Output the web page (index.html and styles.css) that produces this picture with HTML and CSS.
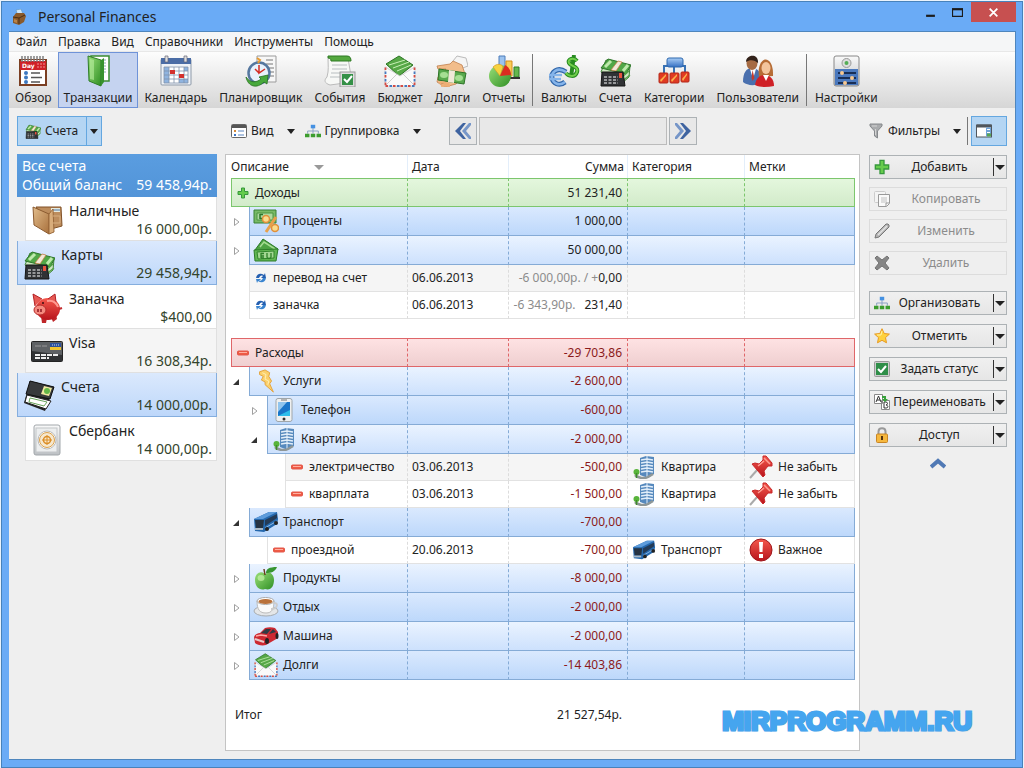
FILE: index.html
```html
<!DOCTYPE html>
<html lang="ru">
<head>
<meta charset="utf-8">
<title>Personal Finances</title>
<link rel="stylesheet" href="styles.css">
</head>
<body>
<svg class="defs" aria-hidden="true">
  <defs>
    <linearGradient id="gGreen" x1="0" y1="0" x2="1" y2="1"><stop offset="0" stop-color="#9be07a"/><stop offset="1" stop-color="#2f8f24"/></linearGradient>
    <linearGradient id="gBrown" x1="0" y1="0" x2="1" y2="1"><stop offset="0" stop-color="#e2bd8c"/><stop offset="1" stop-color="#a8703c"/></linearGradient>
    <linearGradient id="gBlue" x1="0" y1="0" x2="0" y2="1"><stop offset="0" stop-color="#a9cdf5"/><stop offset="1" stop-color="#3671c4"/></linearGradient>
    <linearGradient id="gRed" x1="0" y1="0" x2="0" y2="1"><stop offset="0" stop-color="#f4584c"/><stop offset="1" stop-color="#b8141c"/></linearGradient>
    <linearGradient id="gGrey" x1="0" y1="0" x2="0" y2="1"><stop offset="0" stop-color="#fafafa"/><stop offset="1" stop-color="#bcc0c4"/></linearGradient>
  </defs>
  <symbol id="app" viewBox="0 0 16 16">
    <path d="M5 1l5 -1 2 5-5 2z" fill="#cfe6f7" stroke="#5b93c0" stroke-width=".6"/>
    <path d="M2 8l3-4 8 0 2 3-2 6-5 3-6-2z" fill="#8a5a2b"/><path d="M2 8l6 1 6-3M8 9v6" stroke="#4a2f16" fill="none"/><path d="M3 10l3 1v3l-3-1z" fill="#b98347"/>
  </symbol>
  <symbol id="folder" viewBox="0 0 32 32">
    <path d="M9 1h18v25H9z" fill="#fff" stroke="#3b8c31" stroke-width="1.500"/><path d="M21 5h3M21 8h3M21 11h3M21 14h3M21 17h3" stroke="#8aa" />
    <path d="M6 1l13 4v26L7 26z" fill="url(#gGreen)" stroke="#2f7d28"/><path d="M19 5l3-2v24l-3 4z" fill="#37922d"/><path d="M8 4l4 1v20l-4-1z" fill="#b9eea0" opacity=".6"/>
  </symbol>
  <symbol id="calendar" viewBox="0 0 32 32">
    <rect x="1" y="4" width="30" height="26" rx="1" fill="#eef2f7" stroke="#8d99a8"/><path d="M1 3h30v6H1z" fill="#4b6da6"/>
    <path d="M4 12h24v16H4z" fill="#fff"/><path d="M4 12h5v16H4zM24 12h4v4h-4zM19 24h9v4h-9z" fill="#8fb4e0"/>
    <path d="M4 12h24v16H4zM9 12v16M14 12v16M19 12v16M24 12v16M4 16h24M4 20h24M4 24h24" fill="none" stroke="#8292aa" stroke-width=".8"/>
    <path d="M10 15h5v4h-5zM19 19h5v4h-5z" fill="#d3302c"/><path d="M5 1h3v6H5zM24 1h3v6h-3z" fill="#ddd" stroke="#667" stroke-width=".7"/>
  </symbol>
  <symbol id="planner" viewBox="0 0 32 32">
    <path d="M12 1h19v26H12z" fill="#f7f7f7" stroke="#9b9b9b"/><path d="M21 5h7M21 9h7M24 13h5M24 17h5M24 21h5" stroke="#777"/>
    <circle cx="14" cy="18" r="10.500" fill="#e8f2fc" stroke="#55779f" stroke-width="2.500"/><path d="M14 10v8l6-4M14 18l-4-4" stroke="#d42b22" stroke-width="1.500" fill="none"/><path d="M12 3l3 2-2 3" fill="none" stroke="#e79b32" stroke-width="2"/>
    <path d="M1 22c4 6 10 6 15 2l-2-2 9-2-1 9-3-2C12 34 3 32 1 22z" fill="#48a93c" stroke="#27701f" stroke-width=".8"/>
  </symbol>
  <symbol id="events" viewBox="0 0 32 32">
    <path d="M4 3h20l4 24-22 3c-6-2-6-5-3-8 2-7 1-12 1-19z" fill="#f7f8f6" stroke="#bbb"/><path d="M4 1h19c3 0 4 2 4 5H7c0-2-1-3-3-3z" fill="#54a83f" stroke="#2f7a25"/>
    <path d="M8 10h15M8 14h15M7 18h12M6 22h10" stroke="#b8bec0"/><rect x="16" y="17" width="15" height="15" fill="#ddd" stroke="#999"/><rect x="18" y="19" width="11" height="11" fill="#349046"/><path d="M20 24l3 3 5-6" fill="none" stroke="#fff" stroke-width="2"/>
  </symbol>
  <symbol id="envelope" viewBox="0 0 32 32">
    <path d="M2 9L15 1l14 9-14 11z" fill="#57a847" stroke="#2c7524"/><path d="M5 10l16-5M9 13l16-6M13 16l14-6" stroke="#c9efb7"/>
    <path d="M1 12l15 9 15-9v19H1z" fill="#fafafa" stroke="#ccc" stroke-width=".7"/><path d="M1 31l12-12M31 31L19 19" stroke="#ccc"/>
    <path d="M1.500 12.500v18.500M30.500 12.500v18.500M1.500 31h29" fill="none" stroke="#d64b44" stroke-width="1.800" stroke-dasharray="2.500 5"/><path d="M1.500 16.500v14.500M30.500 16.500v14.500M5.500 31h25" fill="none" stroke="#4679c0" stroke-width="1.800" stroke-dasharray="2.500 5"/>
  </symbol>
  <symbol id="debts" viewBox="0 0 32 32">
    <path d="M17 6l4-5 9 2 2 8-8 3-7-3z" fill="#f5f5f5" stroke="#bbb"/><path d="M1 11l13-2 3-3 9 4 3 9-9 10-11 3-8-5 1-5 8-8-8 0z" fill="#f2bd8b" stroke="#c07f4c" stroke-width=".8"/>
    <path d="M3 14l27 4-2 11-26-4z" fill="#59a94d" stroke="#2e7428"/><ellipse cx="8" cy="20" rx="4" ry="3" fill="#a6df93"/><ellipse cx="23" cy="23" rx="4" ry="3" fill="#a6df93"/><path d="M13 15l6 1-1 12-6-1z" fill="#f0e8d8"/>
    <path d="M3 28c3-1 8 0 10 2M5 31c3-1 6-1 9 0" stroke="#eead74" stroke-width="2.500"/>
  </symbol>
  <symbol id="reports" viewBox="0 0 32 32">
    <path d="M11 1h6v18h-6z" fill="#9cc3ef" stroke="#4c7dba"/><path d="M18 6h6v15h-6z" fill="#f9cd56" stroke="#d48d1c"/><path d="M26 12h5v10h-5z" fill="#64b84e" stroke="#2e7d27"/><path d="M16 22h16v2H16z" fill="#333"/>
    <circle cx="12" cy="21" r="11" fill="url(#gGreen)"/><path d="M12 21L5 12c4-4 9-3 10 0z" fill="#f7d33f" stroke="#d59b26" stroke-width=".7"/><path d="M12 21l5-11c4 2 6 6 6 10z" fill="#dc2d20"/>
  </symbol>
  <symbol id="currency" viewBox="0 0 32 32">
    <path d="M18 17c-9-6-15 1-14 6s7 9 13 4" fill="none" stroke="#2f65a9" stroke-width="5"/><path d="M18 17c-9-6-15 1-14 6s7 9 13 4M1 20h13M1 24h12" fill="none" stroke="#85b4ea" stroke-width="2.500"/>
    <path d="M29 6c-3-4-10-2-8 2s10 3 8 9-9 4-11 1M26 0l-3 22" fill="none" stroke="#278b20" stroke-width="4"/><path d="M29 6c-3-4-10-2-8 2s10 3 8 9-9 4-11 1" fill="none" stroke="#72cf4c" stroke-width="2"/>
  </symbol>
  <symbol id="moneycalc" viewBox="0 0 32 32">
    <path d="M2 17l5-12 24 6-1 11-8 7z" fill="#cfe9c2" stroke="#3d8238"/><path d="M2 13L9 4l23 6-5 9z" fill="#51a747" stroke="#2e7529"/><path d="M22 23l8-7M22 27l9-7" stroke="#56a34a" stroke-width="1.500"/>
    <path d="M6 12l6-6M24 16l5-6" stroke="#bfe9ac" stroke-width="3"/><path d="M12 15l7-9 4 1-6 9z" fill="#f2e9da" stroke="#d07a45" stroke-width=".7"/>
    <path d="M3 17h21l2 14H2z" fill="#303235" stroke="#151515"/><path d="M5 22h14M5 25h14M5 28h14" stroke="#b9babc" stroke-width="1.400" stroke-dasharray="3 1.500"/><path d="M20 18h3v5h-3z" fill="#e6533e"/>
  </symbol>
  <symbol id="categories" viewBox="0 0 32 32">
    <path d="M6 19v-8h21v8M16 8v14" fill="none" stroke="#3872b4" stroke-width="2"/><rect x="9" y="3" width="16" height="9" rx="2" fill="url(#gBlue)" stroke="#2e68ae"/>
    <g fill="#e03a22" stroke="#b3281a"><rect x="1" y="18" width="9" height="10" rx="1"/><rect x="12" y="18" width="9" height="10" rx="1"/><rect x="23" y="17" width="8" height="10" rx="1"/></g><path d="M2 25l6-6v2l-5 6zM13 25l6-6v2l-5 6zM24 24l5-6v2l-4 6z" fill="#fbb04b"/>
  </symbol>
  <symbol id="users" viewBox="0 0 32 32">
    <path d="M1 27c0-9 3-14 9-14s10 5 9 15c-6 3-13 3-18-1z" fill="#4a70ae"/><path d="M8 14l3 10 3-10z" fill="#fff"/><path d="M10.500 15l2 8-2 3-1-3z" fill="#c43b2e"/><ellipse cx="10" cy="8" rx="5.500" ry="7" fill="#a66b43"/><path d="M4 7c0-8 13-9 12 1-3-3-8-4-12-1z" fill="#33231b"/>
    <path d="M17 22c-3-22 15-24 14-1z" fill="#b66c35"/><ellipse cx="24" cy="13" rx="4.500" ry="6" fill="#f3c49c"/><path d="M13 30c1-7 5-10 10-10s9 4 9 11c-6 1-13 2-19-1z" fill="#cf2026"/><path d="M21 20l3 6 3-6z" fill="#fff"/>
  </symbol>
  <symbol id="settings" viewBox="0 0 32 32">
    <rect x="4" y="1" width="25" height="30" rx="2" fill="url(#gGrey)" stroke="#888"/><circle cx="16.500" cy="8" r="4.500" fill="#ddd" stroke="#999"/><circle cx="16.500" cy="8" r="2" fill="#54ad55"/>
    <path d="M5 14h23v16H5z" fill="#4a78bd"/><path d="M8 18h18M8 23h18M8 28h18" stroke="#182e55" stroke-width="2"/><g fill="#f7c890"><circle cx="12" cy="18" r="2"/><circle cx="22" cy="23" r="2"/><circle cx="15" cy="28" r="2"/></g>
  </symbol>
  <symbol id="listview" viewBox="0 0 16 14">
    <rect x=".5" y=".5" width="15" height="13" rx="1" fill="#fff" stroke="#666"/><path d="M1 1h14v3H1z" fill="#555"/><path d="M3 6h2v2H3z" fill="#d58a38"/><path d="M3 10h2v2H3z" fill="#3b75c3"/><path d="M7 7h6M7 11h6" stroke="#5b85c0"/>
  </symbol>
  <symbol id="org" viewBox="0 0 18 16">
    <path d="M9 4v7M3 11V8h12v3" fill="none" stroke="#829bbd"/><path d="M6.500 1h5v4h-5z" fill="#4591e2"/><path d="M0 11h5v4H0zM6.500 11h5v4h-5zM13 11h5v4h-5z" fill="#3c9d2e"/>
  </symbol>
  <symbol id="prev" viewBox="0 0 16 16"><path d="M8 0L0 8l8 8h3L5 8l6-8z" fill="#3e63a0"/><path d="M14 0L7 8l7 8h2v-2l-5-6 5-6V0z" fill="#7696c8"/></symbol>
  <symbol id="next" viewBox="0 0 16 16"><path d="M8 0l8 8-8 8H5l6-8-6-8z" fill="#3e63a0"/><path d="M2 0l7 8-7 8H0v-2l5-6-5-6V0z" fill="#7696c8"/></symbol>
  <symbol id="funnel" viewBox="0 0 14 16"><path d="M1 1h12v2L8.500 8v7l-3-2V8L1 3z" fill="#a9abad" stroke="#85888b"/><path d="M3 3h5M6.500 6v6" stroke="#d4d4d4"/></symbol>
  <symbol id="panel" viewBox="0 0 16 13"><rect x=".5" y=".5" width="15" height="12" fill="#fff" stroke="#50565c"/><path d="M1 0h14v3H1z" fill="#50565c"/><path d="M10 3h5v9h-5z" fill="#6fa3d9"/><path d="M11 5h3M11 8h3" stroke="#fff"/><path d="M11 9h4v3h-4z" fill="#5aa552"/></symbol>
  <symbol id="wallet" viewBox="0 0 32 32">
    <path d="M5 3h25l1 19-11 3z" fill="#bd8d5d" stroke="#805127"/><path d="M20 4h9v4h-9z" fill="#e5eadf"/><path d="M22 6h7" stroke="#4e79a9"/><path d="M2 3l16 7v20L3 21z" fill="url(#gBrown)" stroke="#8b5b31"/><path d="M18 10l4-5 1 23-5 2z" fill="#d9ad7b" stroke="#9a693b"/><path d="M22 12h7v7h-7" fill="none" stroke="#d7ae80"/>
  </symbol>
  <symbol id="piggy" viewBox="0 0 32 32">
    <path d="M10 24l1 7h4l1-5M20 25l2 5 4-3-1-5" fill="#bf2629"/><ellipse cx="17" cy="17" rx="12" ry="11" fill="url(#gRed)"/><path d="M4 14L2 2l9 5M17 7l7-5 1 8" fill="#e65a54" stroke="#b42024"/><ellipse cx="9" cy="18" rx="6" ry="5" fill="#f48a7f" stroke="#b72a2a"/><path d="M7 17v3M10 17v3" stroke="#8d1620" stroke-width="1.500"/><path d="M16 9c5-1 9 1 11 6" fill="none" stroke="#ff9b91" stroke-width="2"/><circle cx="12" cy="11" r="1" fill="#3b0d10"/><path d="M28 17l3-1" stroke="#c32d30" stroke-width="2"/>
  </symbol>
  <symbol id="card" viewBox="0 0 32 22">
    <rect x=".5" y=".5" width="31" height="20" rx="1" fill="#5e6164" stroke="#242424"/><path d="M1 10l30 4v6H1z" fill="#303234"/><path d="M19 2h11v4H19z" fill="#2c519b"/><path d="M19 6h11v3H19z" fill="#f0c330"/><path d="M21 4h7" stroke="#cfd9ee" stroke-dasharray="1 1"/><path d="M4 5h12" stroke="#999" stroke-dasharray="6 1"/><path d="M4 14h23M4 17h14" stroke="#eee" stroke-width="2" stroke-dasharray="5 1"/>
  </symbol>
  <symbol id="checkbook" viewBox="0 0 32 32">
    <path d="M7 1l24 6-9 24L1 23z" fill="#242526"/><path d="M7 1l24 6-4 12L3 14z" fill="#37393b" stroke="#111"/><path d="M21 6l8 2-3 8-8-2z" fill="#f0e8a0"/><circle cx="24" cy="11" r="3" fill="#64b647"/><path d="M4 15l24 6-5 8L2 22z" fill="#fff" stroke="#222"/><path d="M7 18l17 4-3 4-15-4z" fill="none" stroke="#68a45b"/>
  </symbol>
  <symbol id="safe" viewBox="0 0 28 32">
    <rect x="1" y="1" width="26" height="30" rx="2" fill="url(#gGrey)" stroke="#a2a7ab"/><rect x="3" y="4" width="21" height="24" fill="#eceeef" stroke="#c2c5c8"/><circle cx="14" cy="16" r="9" fill="#fff" stroke="#bbb"/><circle cx="14" cy="16" r="7.500" fill="#f6e8cf" stroke="#daa14c"/><circle cx="14" cy="16" r="3.500" fill="none" stroke="#dc8e27" stroke-width="1.500"/><path d="M14 11v10M9 16h10" stroke="#dc8e27"/>
  </symbol>
  <symbol id="cash" viewBox="0 0 26 24">
    <path d="M2 12L10 1l15 10-2 5z" fill="#4da343" stroke="#2b7927"/><path d="M7 9l4-5 11 7" fill="none" stroke="#a5dc92" stroke-width="1.500"/><path d="M1 12l24-1-2 12H2z" fill="#61b652" stroke="#2d7c29"/><path d="M4 14l17-1v7l-16 1z" fill="#a3d792" stroke="#31852b"/><path d="M8 15v5M8 15.500h3M8 18h3M8 20h3M14 15v4c0 2 4 2 4 0v-4" fill="none" stroke="#2d8028" stroke-width="1.300"/>
  </symbol>
  <symbol id="percent" viewBox="0 0 26 24">
    <path d="M1 1h22v13H1z" fill="#78b966" stroke="#388134"/><path d="M4 4h16v7H4z" fill="#aed99f" stroke="#4c9443"/><path d="M7 5v5M7 5.500h3M7 9.500h3" stroke="#2c752a" stroke-width="1.500"/><path d="M13 23L23 8" stroke="#e8a04a" stroke-width="3"/><circle cx="13" cy="10" r="3.500" fill="#fbdc8c" stroke="#e08f3a" stroke-width="1.500"/><circle cx="22" cy="19" r="3.500" fill="#fbdc8c" stroke="#e08f3a" stroke-width="1.500"/>
  </symbol>
  <symbol id="sync" viewBox="0 0 12 12"><path d="M1 6c1-5 5-5 8-3l1-2 1 5H6l2-2c-2-1-3 0-4 2z" fill="#245fb0"/><path d="M11 6c-1 5-5 5-8 3l-1 2-1-4h5L4 9c2 0 3-1 4-3z" fill="#3984d0"/></symbol>
  <symbol id="minus" viewBox="0 0 12 6"><rect x=".5" y="1" width="11" height="4" rx="1" fill="#ef5b44" stroke="#e2574a"/><path d="M2 2.500h8" stroke="#ffaea0"/></symbol>
  <symbol id="plus" viewBox="0 0 12 12"><path d="M4.500 1h3v3.500H11v3H7.500V11h-3V7.500H1v-3h3.500z" fill="#66cc4c" stroke="#37983c"/></symbol>
  <symbol id="bolt" viewBox="0 0 20 26"><path d="M3 3l6-2 5 3-1 4 3 5-2 3 4 9-9-8 0-3-4-2 2-4-4-2z" fill="#fbd06a" stroke="#e3a138"/><path d="M6 4l4 2-1 5 4 2-1 4" fill="none" stroke="#fff0b8"/></symbol>
  <symbol id="phone" viewBox="0 0 18 24"><rect x="1" y=".5" width="16" height="23" rx="2" fill="#eef0f1" stroke="#a0a6aa"/><path d="M3 4h12v14H3z" fill="#1a75c9"/><path d="M3 4h9L3 14z" fill="#8fc4ee"/><path d="M3 18l12-6v6z" fill="#2ebdeb"/><path d="M6 2h6" stroke="#777"/><circle cx="9" cy="21" r="1.500" fill="#333"/></symbol>
  <symbol id="building" viewBox="0 0 22 24"><path d="M7 3l6-2 8 1v17l-6 4-8-3z" fill="#5689bd"/><path d="M14 1v21" stroke="#e5f0fa"/><path d="M8 5l6-1 6 1M8 8l6-1 6 1M8 11l6-1 6 1M8 14l6-1 6 1M8 17l6-1 6 1" fill="none" stroke="#e2eef9" stroke-width="1.500"/><path d="M2 20c3 3 9 4 13 2l5-3" fill="none" stroke="#8f9797" stroke-width="2.500"/><circle cx="3.500" cy="17" r="3" fill="#58b43a"/><path d="M3.500 18v5" stroke="#3f8a2a" stroke-width="1.500"/></symbol>
  <symbol id="bus" viewBox="0 0 26 22"><path d="M1 8L16 1h8l1 7-1 5-13 8-9-1z" fill="#2568ad"/><path d="M1 8L16 1h8L10 8z" fill="#5e9cdb"/><path d="M2 9h9l-1 8H3z" fill="#263342"/><path d="M12 9l12-6v4l-12 8z" fill="#243b57"/><path d="M12 17l12-7" stroke="#8db9e6"/><path d="M2 18h8" stroke="#aab9c6" stroke-width="2"/><circle cx="14" cy="18" r="2" fill="#222"/><circle cx="23" cy="12" r="2" fill="#222"/></symbol>
  <symbol id="pin" viewBox="0 0 24 24"><path d="M9 14L1 23" stroke="#aaa" stroke-width="2"/><path d="M3 9l3-1 4 1 4-4V1l3 0 6 7v3l-4 0-4 5 1 4-2 2z" fill="url(#gRed)" stroke="#c9292a"/><path d="M9 11l6-5M15 3l6 6" stroke="#ff9d92" stroke-width="1.500"/></symbol>
  <symbol id="alert" viewBox="0 0 24 24"><circle cx="12" cy="12" r="11" fill="url(#gRed)" stroke="#9f171c"/><path d="M10 4h4l-.5 10h-3zM10 16h4v4h-4z" fill="#fff"/></symbol>
  <symbol id="apple" viewBox="0 0 24 24"><path d="M11 8C7 4 1 7 1 14s5 11 10 9c6 2 9-3 9-9S15 4 11 8z" fill="url(#gGreen)"/><path d="M12 7c0-4 3-6 11-6-2 5-6 6-11 6" fill="#379531"/><path d="M10 3l1 6" stroke="#6b3b20" stroke-width="1.500"/><ellipse cx="7" cy="12" rx="3.500" ry="3" fill="#c8f3a9" opacity=".7"/></symbol>
  <symbol id="coffee" viewBox="0 0 26 22"><ellipse cx="13" cy="15" rx="12" ry="5" fill="#e4e6e8" stroke="#a8acb0"/><path d="M4 5c0 9 3 12 9 12s8-4 8-12z" fill="#fafafa" stroke="#bbb"/><ellipse cx="12.500" cy="5" rx="8.500" ry="3.500" fill="#fff" stroke="#aaa"/><ellipse cx="12.500" cy="5.500" rx="7" ry="2.500" fill="#b9713a"/><path d="M20 7c6-1 5 6-2 6" fill="none" stroke="#ccc" stroke-width="2"/></symbol>
  <symbol id="car" viewBox="0 0 26 20"><path d="M1 11c1-3 4-4 6-4l5-5c3-1 7-1 10 0l3 4v6l-12 7c-4 1-9 0-11-2z" fill="#cd2932"/><path d="M8 7l5-4h5l-4 5zM20 3l3 3-7 2z" fill="#2f3b43"/><path d="M3 10l5-1 6 1" stroke="#ffaba5" fill="none" stroke-width="1.500"/><path d="M2 13l9 3" stroke="#e8c8c8" stroke-width="2"/><ellipse cx="14" cy="15" rx="2" ry="3" fill="#222"/><ellipse cx="24" cy="10" rx="1.500" ry="3" fill="#222"/></symbol>
  <symbol id="copy" viewBox="0 0 16 16"><rect x=".5" y=".5" width="11" height="11" rx="1" fill="#f4f4f4" stroke="#ccc"/><path d="M4.500 3.500h11v9l-3 3h-8z" fill="#fafafa" stroke="#999"/><path d="M7 6h6v6H7z" fill="#ddd"/><path d="M12 15v-3h3" fill="none" stroke="#999"/></symbol>
  <symbol id="pencil" viewBox="0 0 16 16"><path d="M1 15l1-4L12 1h2l1 1v2L5 14z" fill="#b4b4b4" stroke="#777"/><path d="M4 12L13 3" stroke="#e4e4e4" stroke-width="1.500"/></symbol>
  <symbol id="cross" viewBox="0 0 16 16"><path d="M3 1l5 4 5-4 2 2-4 5 4 5-2 2-5-4-5 4-2-2 4-5-4-5z" fill="#868686" stroke="#747474"/></symbol>
  <symbol id="star" viewBox="0 0 16 16"><path d="M8 .7l2.200 4.800 5.200.6-3.900 3.500 1 5.200L8 12.300l-4.500 2.500 1-5.200L.6 6.100l5.200-.6z" fill="#fed13d" stroke="#e89a22"/><path d="M8 3l-1 4-4 0" fill="none" stroke="#fff2a8"/></symbol>
  <symbol id="check" viewBox="0 0 16 16"><rect x=".5" y=".5" width="15" height="15" rx="1" fill="#ccc" stroke="#999"/><path d="M2 2h12v12H2z" fill="#2f8e48"/><path d="M4 8l3 3 5-6" fill="none" stroke="#fff" stroke-width="2"/></symbol>
  <symbol id="rename" viewBox="0 0 16 16"><path d="M.5.500h8v9h-8zM7.500 6.500h8v9h-8z" fill="#fff" stroke="#888"/><path d="M2 8l2.500-6L7 8M3 6h3M10 8v6h2c3 0 2-3 0-3 2 0 2-3 0-3z" fill="none" stroke="#333"/><path d="M8 2h4v3h2l-3 3-3-3h2V4H8z" fill="#37a13a"/></symbol>
  <symbol id="lock" viewBox="0 0 12 16"><path d="M2.500 8V4.500c0-4.500 7-4.500 7 0V8" fill="none" stroke="#999" stroke-width="2"/><rect x=".5" y="7" width="11" height="8.500" rx="1" fill="#f6b83e" stroke="#c98524"/><path d="M6 9v4" stroke="#573510" stroke-width="2"/></symbol>
  <symbol id="up" viewBox="0 0 16 12"><path d="M1 9l7-6 7 6" fill="none" stroke="#5079b5" stroke-width="4"/></symbol>
  <symbol id="closed" viewBox="0 0 8 10"><path d="M1.500 1.500L6 5 1.500 8.500z" fill="#fff" stroke="#a0a0a0"/></symbol>
  <symbol id="open" viewBox="0 0 8 10"><path d="M6 2v6H0z" fill="#333"/></symbol>
</svg>

<div class="window">
  <header class="titlebar">
    <svg class="i16"><use href="#app"/></svg>
    <h1>Personal Finances</h1>
    <div class="winbuttons">
      <button type="button" aria-label="Свернуть"><svg viewBox="0 0 10 10"><path d="M1 8h8" stroke="#1c1c1c" stroke-width="2"/></svg></button>
      <button type="button" aria-label="Развернуть"><svg viewBox="0 0 10 10"><path d="M.5 2h9v6.500h-9z" fill="none" stroke="#1c1c1c"/><path d="M0 2h10" stroke="#1c1c1c" stroke-width="2"/></svg></button>
      <button type="button" class="close" aria-label="Закрыть"><svg viewBox="0 0 10 10"><path d="M1.500 1.500l7 7M8.500 1.500l-7 7" stroke="#fff" stroke-width="1.600"/></svg></button>
    </div>
  </header>

  <div class="client">
    <nav class="menu">
      <a href="#">Файл</a><a href="#">Правка</a><a href="#">Вид</a><a href="#">Справочники</a><a href="#">Инструменты</a><a href="#">Помощь</a>
    </nav>

    <div class="toolbar">
      <button type="button"><svg viewBox="0 0 32 32">
        <path d="M2 4h28v27H2z" fill="#7b3f22"/><path d="M4 5h24v24H4z" fill="#fff"/><path d="M3 6h26v9H3z" fill="#cf2027"/>
        <path d="M5 1v6M8 1v6M11 1v6M14 1v6M17 1v6M20 1v6M23 1v6M26 1v6" stroke="#777" stroke-width="1.400"/>
        <text x="5" y="13" font-family="DejaVu Sans" font-weight="bold" font-size="6" fill="#fff">Day</text>
        <path d="M20 9h8M20 12h8" stroke="#f09090" stroke-dasharray="2 1"/>
        <g fill="#3c78c0"><circle cx="9" cy="18" r="2"/><circle cx="9" cy="22.500" r="2"/><circle cx="9" cy="27" r="2"/></g>
        <path d="M14 18h9M14 22.500h11M14 27h9" stroke="#555" stroke-width="1.500"/>
      </svg>Обзор</button>
      <button type="button" class="active"><svg><use href="#folder"/></svg>Транзакции</button>
      <button type="button"><svg><use href="#calendar"/></svg>Календарь</button>
      <button type="button"><svg><use href="#planner"/></svg>Планировщик</button>
      <button type="button"><svg><use href="#events"/></svg>События</button>
      <button type="button"><svg><use href="#envelope"/></svg>Бюджет</button>
      <button type="button"><svg><use href="#debts"/></svg>Долги</button>
      <button type="button"><svg><use href="#reports"/></svg>Отчеты</button>
      <span class="sep"></span>
      <button type="button"><svg><use href="#currency"/></svg>Валюты</button>
      <button type="button"><svg><use href="#moneycalc"/></svg>Счета</button>
      <button type="button"><svg><use href="#categories"/></svg>Категории</button>
      <button type="button"><svg><use href="#users"/></svg>Пользователи</button>
      <span class="sep"></span>
      <button type="button"><svg><use href="#settings"/></svg>Настройки</button>
    </div>

    <div class="workspace">
      <div class="accounts-bar">
        <div class="split-blue">
          <button type="button"><svg class="i16"><use href="#moneycalc"/></svg>Счета</button>
          <button type="button" class="drop" aria-label="Список счетов"><span class="tri"></span></button>
        </div>
      </div>
      <div class="view-bar">
        <button type="button" class="flat"><svg class="i16"><use href="#listview"/></svg>Вид<span class="tri"></span></button>
        <button type="button" class="flat group"><svg class="i16"><use href="#org"/></svg>Группировка<span class="tri"></span></button>
        <div class="period">
          <button type="button" aria-label="Назад"><svg><use href="#prev"/></svg></button>
          <button type="button" class="range" aria-label="Период"></button>
          <button type="button" aria-label="Вперед"><svg><use href="#next"/></svg></button>
        </div>
      </div>
      <div class="filter-bar">
        <button type="button" class="flat"><svg class="i16"><use href="#funnel"/></svg>Фильтры<span class="tri"></span></button>
        <span class="sep"></span>
        <button type="button" class="panel-toggle" aria-label="Панель"><svg class="i16"><use href="#panel"/></svg></button>
      </div>

      <aside class="accounts">
        <a href="#" class="total"><span>Все счета</span><span class="line">Общий баланс <b>59 458,94р.</b></span></a>
        <a href="#" class="acc"><svg><use href="#wallet"/></svg><span class="nm">Наличные</span><span class="amt">16 000,00р.</span></a>
        <a href="#" class="acc grp"><svg><use href="#moneycalc"/></svg><span class="nm">Карты</span><span class="amt">29 458,94р.</span></a>
        <a href="#" class="acc"><svg><use href="#piggy"/></svg><span class="nm">Заначка</span><span class="amt">$400,00</span></a>
        <a href="#" class="acc alt"><svg><use href="#card"/></svg><span class="nm">Visa</span><span class="amt">16 308,34р.</span></a>
        <a href="#" class="acc grp"><svg><use href="#checkbook"/></svg><span class="nm">Счета</span><span class="amt">14 000,00р.</span></a>
        <a href="#" class="acc"><svg><use href="#safe"/></svg><span class="nm">Сбербанк</span><span class="amt">14 000,00р.</span></a>
      </aside>

      <main class="sheet">
        <table>
          <colgroup><col class="c1"><col class="c2"><col class="c3"><col class="c4"><col class="c5"></colgroup>
          <thead><tr><th>Описание <span class="tri sort"></span></th><th>Дата</th><th class="num">Сумма</th><th>Категория</th><th>Метки</th></tr></thead>
          <tbody>
            <tr class="income"><td class="name"><div class="cell"><svg class="i12"><use href="#plus"/></svg>Доходы</div></td><td></td><td class="num">51 231,40</td><td></td><td></td></tr>
            <tr class="cat deep"><td class="name"><div class="lvl"><svg class="tw"><use href="#closed"/></svg><div class="cell"><svg class="i26"><use href="#percent"/></svg>Проценты</div></div></td><td></td><td class="num">1 000,00</td><td></td><td></td></tr>
            <tr class="cat"><td class="name"><div class="lvl"><svg class="tw"><use href="#closed"/></svg><div class="cell"><svg class="i26"><use href="#cash"/></svg>Зарплата</div></div></td><td></td><td class="num">50 000,00</td><td></td><td></td></tr>
            <tr class="item alt"><td class="name"><div class="lvl"><span class="tw"></span><div class="cell"><svg class="i12"><use href="#sync"/></svg>перевод на счет</div></div></td><td>06.06.2013</td><td class="num"><i>-6 000,00р. / +</i>0,00</td><td></td><td></td></tr>
            <tr class="item"><td class="name"><div class="lvl"><span class="tw"></span><div class="cell"><svg class="i12"><use href="#sync"/></svg>заначка</div></div></td><td>06.06.2013</td><td class="num"><i class="away">-6 343,90р.</i>231,40</td><td></td><td></td></tr>
            <tr class="blank"><td colspan="5"></td></tr>
            <tr class="expense"><td class="name"><div class="cell"><svg class="i12"><use href="#minus"/></svg>Расходы</div></td><td></td><td class="num neg">-29 703,86</td><td></td><td></td></tr>
            <tr class="cat"><td class="name"><div class="lvl"><svg class="tw"><use href="#open"/></svg><div class="cell"><svg class="i26"><use href="#bolt"/></svg>Услуги</div></div></td><td></td><td class="num neg">-2 600,00</td><td></td><td></td></tr>
            <tr class="cat deep"><td class="name"><div class="lvl two"><svg class="tw"><use href="#closed"/></svg><div class="cell"><svg class="i26"><use href="#phone"/></svg>Телефон</div></div></td><td></td><td class="num neg">-600,00</td><td></td><td></td></tr>
            <tr class="cat"><td class="name"><div class="lvl two"><svg class="tw"><use href="#open"/></svg><div class="cell"><svg class="i26"><use href="#building"/></svg>Квартира</div></div></td><td></td><td class="num neg">-2 000,00</td><td></td><td></td></tr>
            <tr class="item alt"><td class="name"><div class="lvl three"><span class="tw"></span><div class="cell"><svg class="i12"><use href="#minus"/></svg>электричество</div></div></td><td>03.06.2013</td><td class="num neg">-500,00</td><td><div class="tag"><svg><use href="#building"/></svg>Квартира</div></td><td><div class="tag"><svg><use href="#pin"/></svg>Не забыть</div></td></tr>
            <tr class="item"><td class="name"><div class="lvl three"><span class="tw"></span><div class="cell"><svg class="i12"><use href="#minus"/></svg>кварплата</div></div></td><td>03.06.2013</td><td class="num neg">-1 500,00</td><td><div class="tag"><svg><use href="#building"/></svg>Квартира</div></td><td><div class="tag"><svg><use href="#pin"/></svg>Не забыть</div></td></tr>
            <tr class="cat deep"><td class="name"><div class="lvl"><svg class="tw"><use href="#open"/></svg><div class="cell"><svg class="i26"><use href="#bus"/></svg>Транспорт</div></div></td><td></td><td class="num neg">-700,00</td><td></td><td></td></tr>
            <tr class="item"><td class="name"><div class="lvl two"><span class="tw"></span><div class="cell"><svg class="i12"><use href="#minus"/></svg>проездной</div></div></td><td>20.06.2013</td><td class="num neg">-700,00</td><td><div class="tag"><svg><use href="#bus"/></svg>Транспорт</div></td><td><div class="tag"><svg><use href="#alert"/></svg>Важное</div></td></tr>
            <tr class="cat"><td class="name"><div class="lvl"><svg class="tw"><use href="#closed"/></svg><div class="cell"><svg class="i26"><use href="#apple"/></svg>Продукты</div></div></td><td></td><td class="num neg">-8 000,00</td><td></td><td></td></tr>
            <tr class="cat deep"><td class="name"><div class="lvl"><svg class="tw"><use href="#closed"/></svg><div class="cell"><svg class="i26"><use href="#coffee"/></svg>Отдых</div></div></td><td></td><td class="num neg">-2 000,00</td><td></td><td></td></tr>
            <tr class="cat"><td class="name"><div class="lvl"><svg class="tw"><use href="#closed"/></svg><div class="cell"><svg class="i26"><use href="#car"/></svg>Машина</div></div></td><td></td><td class="num neg">-2 000,00</td><td></td><td></td></tr>
            <tr class="cat deep"><td class="name"><div class="lvl"><svg class="tw"><use href="#closed"/></svg><div class="cell"><svg class="i26"><use href="#envelope"/></svg>Долги</div></div></td><td></td><td class="num neg">-14 403,86</td><td></td><td></td></tr>
          </tbody>
          <tfoot><tr><td>Итог</td><td></td><td class="num">21 527,54р.</td><td></td><td></td></tr></tfoot>
        </table>
      </main>

      <aside class="actions">
        <div class="act"><button type="button"><svg><use href="#plus"/></svg><span>Добавить</span></button><button type="button" class="more" aria-label="Ещё"><span class="tri"></span></button></div>
        <div class="act off"><button type="button" disabled><svg><use href="#copy"/></svg><span>Копировать</span></button></div>
        <div class="act off"><button type="button" disabled><svg><use href="#pencil"/></svg><span>Изменить</span></button></div>
        <div class="act off"><button type="button" disabled><svg><use href="#cross"/></svg><span>Удалить</span></button></div>
        <div class="act first"><button type="button"><svg><use href="#org"/></svg><span>Организовать</span></button><button type="button" class="more" aria-label="Ещё"><span class="tri"></span></button></div>
        <div class="act low"><button type="button"><svg><use href="#star"/></svg><span>Отметить</span></button><button type="button" class="more" aria-label="Ещё"><span class="tri"></span></button></div>
        <div class="act low"><button type="button"><svg><use href="#check"/></svg><span>Задать статус</span></button><button type="button" class="more" aria-label="Ещё"><span class="tri"></span></button></div>
        <div class="act low"><button type="button"><svg><use href="#rename"/></svg><span>Переименовать</span></button><button type="button" class="more" aria-label="Ещё"><span class="tri"></span></button></div>
        <div class="act low"><button type="button"><svg><use href="#lock"/></svg><span>Доступ</span></button><button type="button" class="more" aria-label="Ещё"><span class="tri"></span></button></div>
        <button type="button" class="collapse" aria-label="Свернуть панель"><svg><use href="#up"/></svg></button>
      </aside>
    </div>
  </div>
  <div class="watermark">MIRPROGRAMM.RU</div>
</div>
</body>
</html>
```
FILE: styles.css
```css
* { box-sizing: border-box; }
body { margin: 0; background: #eaf3fc; font: 12px/16px "Noto Sans", "Open Sans", sans-serif; color: #222; }
button { font: inherit; color: inherit; background: none; border: 0; padding: 0; margin: 0; display: flex; align-items: center; white-space: nowrap; }
a { color: inherit; text-decoration: none; }
svg { flex: none; display: block; }
.defs { position: absolute; width: 0; height: 0; }
.i12 { width: 12px; height: 12px; }
.i16 { width: 16px; height: 16px; }
.i26 { width: 26px; height: 24px; }
.tri { width: 0; height: 0; border: 4px solid transparent; border-top: 5px solid #222; border-bottom: 0; }

body { min-height: 100vh; padding: 1px; display: flex; flex-direction: column; }
.window { position: relative; flex: 1; display: flex; flex-direction: column; background: #6aabf6; border: 1px solid #4782bb; padding: 0 6px 7px 7px; }
.titlebar { height: 29px; display: flex; align-items: center; gap: 11px; padding-left: 2px; }
.titlebar h1 { margin: 0; flex: 1; font-size: 14px; line-height: 20px; font-weight: normal; }
.winbuttons { display: flex; align-self: flex-start; }
.winbuttons button { width: 27px; height: 20px; justify-content: center; }
.winbuttons svg { width: 11px; height: 11px; }
.winbuttons .close { width: 45px; background: #c75050; }
.client { flex: 1; display: flex; flex-direction: column; background: #efefef; border: 1px solid #4f86bd; border-left: 0; }
.menu { display: flex; gap: 11px; height: 20px; align-items: center; padding: 0 7px; background: #f5f6f7; border-bottom: 1px solid #e8e8e8; }

.toolbar { display: flex; height: 56px; background: linear-gradient(#fdfdfd, #d6d6d6); }
.toolbar button { flex-direction: column; padding: 3px 5px 0; gap: 3px; border: 1px solid transparent; border-width: 0 1px; }
.toolbar svg { width: 32px; height: 32px; }
.toolbar .active { background: #c5d3f0; border: 1px solid #6f93d8; padding-top: 2px; }
.toolbar .sep { width: 1px; margin: 2px 2px 2px 1px; background: #777; }

.workspace { flex: 1; display: grid; grid-template-columns: 200px minmax(0, 1fr) 139px; grid-template-rows: 30px 1fr; gap: 8px; padding: 8px; }
.split-blue { display: inline-flex; height: 30px; background: #b4d5f3; border: 1px solid #64a7e0; }
.split-blue button { gap: 4px; padding: 0 8px 0 7px; }
.split-blue .drop { padding: 0 3px; border-left: 1px solid #64a7e0; }
.view-bar { display: flex; align-items: center; padding-left: 6px; }
.flat { gap: 4px; }
.flat .tri { margin-left: 9px; }
.group { margin-left: 10px; }
.group .tri { margin-left: 10px; }
.period { display: flex; gap: 2px; margin-left: 28px; }
.period button { width: 28px; height: 28px; justify-content: center; border: 1px solid #adb2b5; background: #e8e8e8; }
.period .range { width: 188px; border-color: #bbb; }
.period svg { width: 18px; height: 16px; }
.filter-bar { display: flex; align-items: center; justify-content: flex-end; }
.filter-bar .flat { flex: 1; }
.filter-bar .sep { width: 1px; height: 28px; background: #777; margin: 0 3px 0 5px; }
.panel-toggle { width: 36px; height: 30px; padding-left: 4px; background: #b4d5f3; border: 1px solid #64a7e0; }

.accounts { font-size: 14px; line-height: 18px; }
.total { display: block; height: 43px; padding: 2px 5px; background: linear-gradient(#5a9de0, #5294d8); color: #fff; }
.total span { display: block; line-height: 19px; }
.total .line { display: flex; justify-content: space-between; }
.total b { font-weight: normal; }
.acc { display: grid; grid-template-columns: 32px 1fr; grid-template-rows: 18px 18px; column-gap: 6px; height: 44px; margin-left: 8px; padding: 5px 4px 2px 5px; background: #fff; border: 1px solid #e0e0e0; border-top: 0; }
.acc svg { grid-row: 1 / 3; align-self: center; width: 32px; height: 32px; }
.acc .amt { text-align: right; color: #33442c; }
.acc.alt { background: #f5f5f5; }
.acc.grp { margin-left: 0; background: linear-gradient(#dbe9fd, #bdd7fa); border-color: #85aede; }

.sheet { background: #fff; border: 1px solid #c4c4c4; padding: 0 4px 0 5px; }
table { width: 100%; table-layout: fixed; border-collapse: separate; border-spacing: 0; }
.c1 { width: 176px; } .c2 { width: 101px; } .c3 { width: 119px; } .c4 { width: 117px; }
th { text-align: left; font-weight: normal; height: 23px; padding: 0 4px; border-left: 1px solid #e3eefa; white-space: nowrap; }
th:first-child { border: 0; padding-left: 0; }
.sort { display: inline-block; border-top-color: #999; border-width: 5px 5px 0; margin-left: 22px; vertical-align: middle; }
td { height: 29px; padding: 0 4px; border-left: 1px dashed #dcdcdc; border-bottom: 1px solid #e2e2e2; white-space: nowrap; }
td:last-child { border-right: 1px solid #e2e2e2; }
td.name { padding: 0; border: 0; }
.num { text-align: right; }
td.num { padding-right: 5px; }
th.num { padding-right: 3px; }
.neg { color: #8b1a1a; }
i { font-style: normal; color: #8c8c8c; }
.away { margin-right: 9px; }
.cell { flex: 1; display: flex; align-items: center; height: 29px; border: 0 solid #e2e2e2; border-width: 0 0 1px 1px; padding-left: 5px; gap: 6px; }
.lvl { display: flex; align-items: center; }
.lvl.two { padding-left: 18px; }
.lvl.three { padding-left: 36px; }
.tw { width: 8px; height: 10px; flex: none; margin: 0 8px 0 2px; }
.cat .cell { padding-left: 3px; gap: 4px; }
.cat td:not(.name), .cat .cell { background: linear-gradient(#eaf3ff, #cde1fd); border-color: #85abd6; }
.cat.deep td:not(.name), .cat.deep .cell { background: linear-gradient(#dae9fe, #bdd8fb); }
.income td:not(.name), .income .cell { background: linear-gradient(#e4f7dd, #d2ebca); border-color: #7cc66d; border-top: 1px solid #7cc66d; }
.expense td:not(.name), .expense .cell { background: linear-gradient(#fee2e3, #efcfd0); border-color: #df6669; border-top: 1px solid #df6669; }
.item td, .item .cell { height: 27px; }
.item.alt td:not(.name), .item.alt .cell { background: #f5f5f5; }
.blank td { height: 19px; border: 0; }
.blank td:last-child { border: 0; }
.tag { display: flex; align-items: center; gap: 5px; }
.tag svg { width: 24px; height: 24px; }
tfoot td, tfoot td:last-child { height: 70px; border: 0; }

.actions { display: flex; flex-direction: column; gap: 8px; padding: 1px 0 0 1px; }
.act { display: flex; height: 24px; border: 1px solid #adb2b5; background: linear-gradient(#f0f0f0, #e6e6e6); }
.act button:first-child { flex: 1; padding: 0 4px; }
.act svg { width: 16px; height: 16px; }
.act span:not(.tri) { flex: 1; text-align: center; }
.act .more { width: 13px; height: 18px; align-self: center; justify-content: center; border-left: 1px solid #333; }
.act .tri { border-width: 5px 5px 0; }
.off { border-color: #dcdcdc; background: #efefef; color: #8c8c8c; }
.off button { color: inherit; }
.first { margin-top: 8px; }
.low { margin-top: 1px; }
.collapse { align-self: center; padding-top: 3px; }
.collapse svg { width: 16px; height: 12px; }

.watermark { position: absolute; right: 50px; bottom: 26px; font: bold 26px/40px "Liberation Sans", sans-serif; color: #45a5ef; -webkit-text-stroke: 3px #45a5ef; text-shadow: 1px 1px 1px #35678c, -1px -1px 0 #4e86b4; }
```
